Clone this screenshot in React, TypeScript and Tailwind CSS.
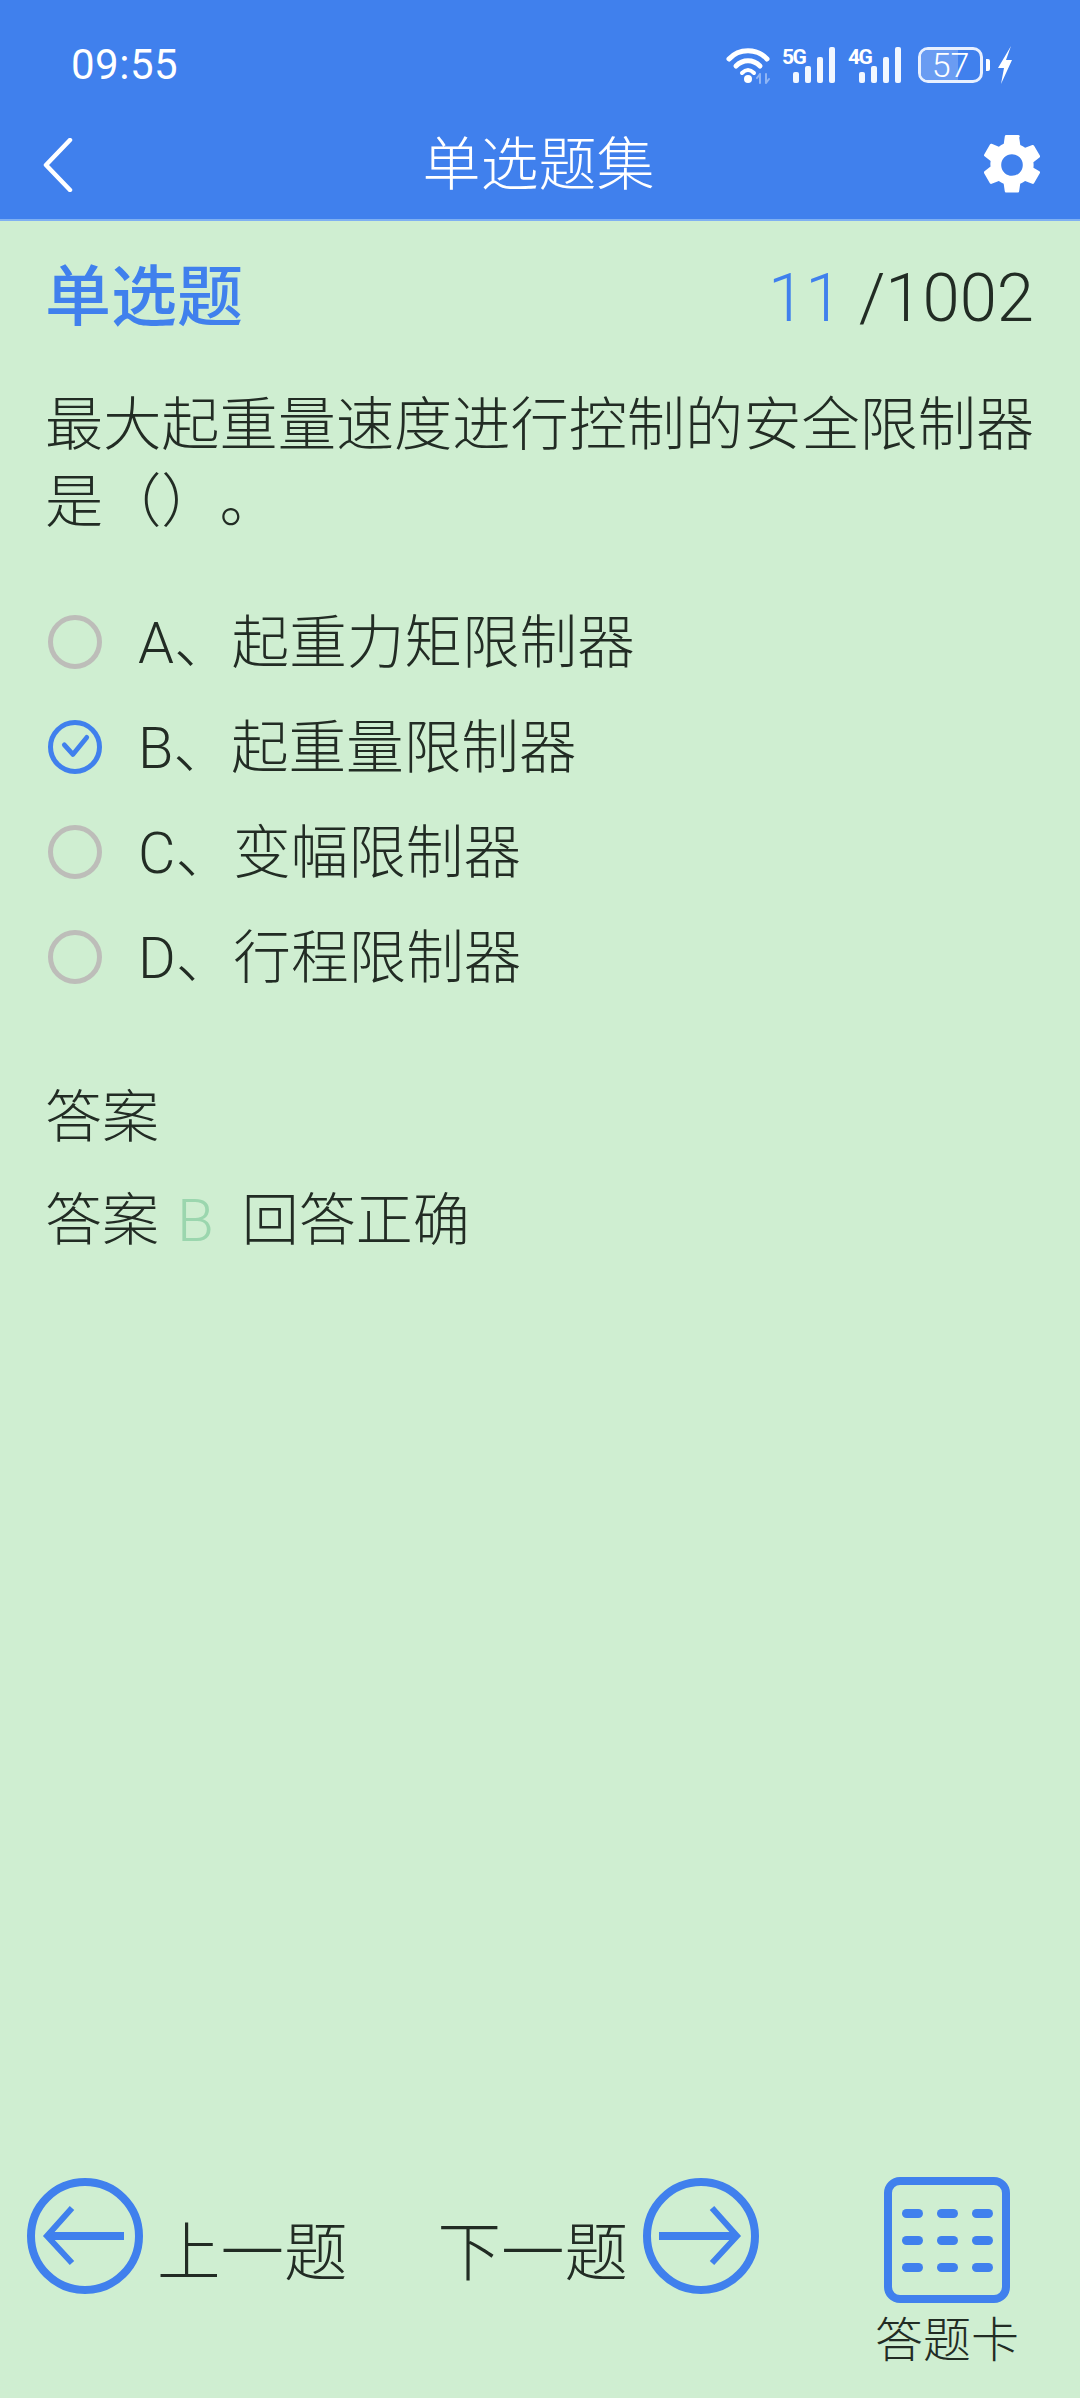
import React from 'react';
import clsx from 'clsx';

const font = { fontFamily: 'Roboto, "Noto Sans CJK SC", sans-serif' };

interface Option {
  label: string;
  text: string;
  checked?: boolean;
}

const options: Option[] = [
  { label: 'A', text: '、起重力矩限制器' },
  { label: 'B', text: '、起重量限制器', checked: true },
  { label: 'C', text: '、变幅限制器' },
  { label: 'D', text: '、行程限制器' },
];

function Signal({ name }: { name: string }) {
  return (
    <div className="relative h-[36px] w-[54px]">
      <span className="absolute left-0 top-0 text-[21px] font-bold leading-[20px] tracking-[-1.5px] text-white">{name}</span>
      <svg viewBox="0 0 43 36" className="absolute right-0 top-0 h-[36px] w-[43px]" fill="#f2f7ff">
        <rect x="0" y="25" width="6" height="11" rx="2" />
        <rect x="12" y="19" width="6" height="17" rx="2" />
        <rect x="24" y="10" width="6" height="26" rx="2" />
        <rect x="36" y="0" width="6" height="36" rx="2" />
      </svg>
    </div>
  );
}

function StatusBar() {
  return (
    <div className="flex h-[48px] items-center justify-between pl-[71px] pr-[68px]">
      <span className="text-[42px] font-normal leading-none tracking-[0.5px] text-white">09:55</span>
      <div className="flex items-center">
        <svg viewBox="0 0 46 38" className="h-[38px] w-[46px]" fill="none" stroke="#ffffff" strokeLinecap="round">
          <path d="M3 13C13 2 31 2 41 13" strokeWidth="5" />
          <path d="M10 20C17 13 27 13 34 20" strokeWidth="5" />
          <path d="M16 27C20 23 24 23 28 27" strokeWidth="4" />
          <circle cx="22" cy="33" r="4" fill="#ffffff" stroke="none" />
          <path d="M34 28V37M34 28L31 32M40 37V28M40 37L43 33" stroke="#8fb5f5" strokeWidth="2" />
        </svg>
        <div className="ml-[10px]">
          <Signal name="5G" />
        </div>
        <div className="ml-[12px]">
          <Signal name="4G" />
        </div>
        <div className="relative ml-[16px] h-[36px] w-[65px] rounded-[10px] border-[3px] border-[#e8f0ff]">
          <div className="h-full w-[37px] rounded-l-[7px] bg-[#6a9cf2]" />
          <span className="absolute inset-0 flex items-center justify-center text-[34px] font-light leading-[30px] text-white">57</span>
        </div>
        <div className="ml-[3px] h-[12px] w-[4px] rounded-r-[2px] bg-white" />
        <svg viewBox="0 0 14 38" className="ml-[8px] h-[38px] w-[14px]" fill="#ffffff">
          <path d="M13 0L0 22H6L3 38L14 14H8Z" />
        </svg>
      </div>
    </div>
  );
}

function Toolbar() {
  return (
    <div className="flex h-[60px] items-center justify-between pl-[29px] pr-[32px]">
      <div className="flex w-[72px] pl-[14px]">
        <svg viewBox="0 0 30 54" className="h-[54px] w-[30px]" fill="none" stroke="#ffffff" strokeWidth="4.5" strokeLinecap="round" strokeLinejoin="round">
          <path d="M27 2L3 27L27 52" />
        </svg>
      </div>
      <h1 className="text-[58px] font-light leading-none text-white">单选题集</h1>
      <svg viewBox="0 0 24 24" className="h-[72px] w-[72px]" fill="#ffffff">
        <path d="M19.14 12.94c.04-.3.06-.61.06-.94s-.02-.64-.07-.94l2.03-1.58a.49.49 0 0 0 .12-.61l-1.92-3.32a.49.49 0 0 0-.59-.22l-2.39.96a7 7 0 0 0-1.62-.94l-.36-2.54A.48.48 0 0 0 13.92 2h-3.84a.47.47 0 0 0-.47.41l-.36 2.54a7.3 7.3 0 0 0-1.62.94l-2.39-.96a.48.48 0 0 0-.59.22L2.73 8.47a.47.47 0 0 0 .12.61l2.03 1.58c-.05.3-.09.63-.09.94s.02.64.07.94l-2.03 1.58a.49.49 0 0 0-.12.61l1.92 3.32c.12.22.37.29.59.22l2.39-.96c.5.38 1.03.7 1.62.94l.36 2.54c.05.24.24.41.48.41h3.84c.24 0 .44-.17.47-.41l.36-2.54a6.9 6.9 0 0 0 1.62-.94l2.39.96c.22.08.47 0 .59-.22l1.92-3.32a.47.47 0 0 0-.12-.61zM12 15.6a3.6 3.6 0 1 1 0-7.2 3.6 3.6 0 0 1 0 7.2z" />
      </svg>
    </div>
  );
}

function Radio({ checked }: { checked?: boolean }) {
  return (
    <div
      className={clsx(
        'flex h-[54px] w-[54px] items-center justify-center rounded-full border-[5px]',
        checked ? 'border-[#4080ed]' : 'border-[#bdbdb9]'
      )}
    >
      {checked && (
        <svg viewBox="0 0 30 24" className="h-[26px] w-[32px]" fill="none" stroke="#4080ed" strokeWidth="4.5" strokeLinecap="round" strokeLinejoin="round">
          <path d="M5 10L13 19L26 3" />
        </svg>
      )}
    </div>
  );
}

function ArrowButton({ direction }: { direction: 'left' | 'right' }) {
  return (
    <svg viewBox="0 0 118 118" className="h-[118px] w-[118px]" fill="none" stroke="#4080ed" strokeWidth="8">
      <circle cx="59" cy="59" r="54" />
      {direction === 'left' ? (
        <>
          <path d="M98 59H21" strokeWidth="8" />
          <path d="M46 31L21 59L46 86" strokeWidth="6" />
        </>
      ) : (
        <>
          <path d="M17 59H95" strokeWidth="8" />
          <path d="M70 31L95 59L70 86" strokeWidth="6" />
        </>
      )}
    </svg>
  );
}

function CardIcon() {
  const rows = [0, 1, 2];
  return (
    <div className="flex h-[126px] w-[126px] flex-col justify-center gap-[18px] rounded-[16px] border-[8px] border-[#4080ed]">
      {rows.map((row) => (
        <div key={row} className="flex justify-center gap-[14px]">
          <div className="h-[9px] w-[21px] rounded-full bg-[#4080ed]" />
          <div className="h-[9px] w-[21px] rounded-full bg-[#4080ed]" />
          <div className="h-[9px] w-[21px] rounded-full bg-[#4080ed]" />
        </div>
      ))}
    </div>
  );
}

export default function App() {
  return (
    <div className="flex h-[2398px] w-[1080px] flex-col overflow-hidden bg-[#cfeed1] text-[#222c24]" style={font}>
      <header className="flex h-[221px] flex-col border-b-2 border-[#7fb0f2] bg-[#4080ed] pt-[41px]">
        <StatusBar />
        <div className="mt-[46px]">
          <Toolbar />
        </div>
      </header>

      <main className="flex-1 px-[45px]">
        <div className="mt-[39px] flex items-center justify-between">
          <h2 className="text-[66px] font-medium leading-[76px] text-[#4080ed]">单选题</h2>
          <div className="mr-[1px] text-[67px] font-light leading-[76px]">
            <span className="text-[#4080ed]">11</span> /1002
          </div>
        </div>

        <p className="mt-[51px] text-[58.2px] font-light leading-[77px] [text-spacing-trim:space-all]">
          最大起重量速度进行控制的安全限制器是（）。
        </p>

        <div className="mt-[74px] flex flex-col gap-[51px]">
          {options.map((option) => (
            <div key={option.label} className="flex h-[54px] items-center pl-[3px]">
              <Radio checked={option.checked} />
              <span className="ml-[36px] mt-[3px] text-[57.6px] font-light leading-none">
                {option.label}
                {option.text}
              </span>
            </div>
          ))}
        </div>

        <div className="mt-[94px] text-[57px] font-light leading-[80px]">答案</div>
        <div className="mt-[23px] flex text-[57px] font-light leading-[80px]">
          <span>答案</span>
          <span className="ml-[18px] text-[60px] text-[#9bd6ae]">B</span>
          <span className="ml-[28px]">回答正确</span>
        </div>
      </main>

      <footer className="flex h-[221px] items-start pl-[26px]">
        <div className="flex items-start">
          <ArrowButton direction="left" />
          <span className="ml-[13px] mt-[37px] text-[63.5px] font-light leading-[80px]">上一题</span>
        </div>
        <div className="ml-[90px] flex items-start">
          <span className="mr-[14px] mt-[37px] text-[63.5px] font-light leading-[80px]">下一题</span>
          <ArrowButton direction="right" />
        </div>
        <div className="ml-[115px] flex flex-col items-center">
          <CardIcon />
          <span className="mt-[8px] text-[48px] font-light leading-[60px]">答题卡</span>
        </div>
      </footer>
    </div>
  );
}
